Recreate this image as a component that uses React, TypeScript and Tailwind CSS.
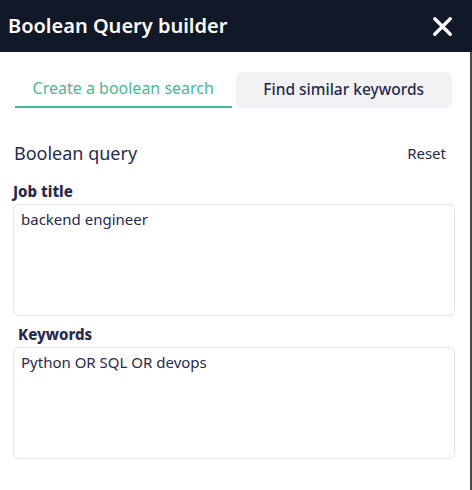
import { X } from "lucide-react";

const Field = ({ label, value, className }: { label: string; value: string; className?: string }) => {
  return (
    <div className="flex flex-col">
      <label className={"text-[15px] font-extrabold leading-5 text-[#272a4f] " + (className ?? "")}>{label}</label>
      <textarea
        defaultValue={value}
        className="mt-[3px] h-[112px] w-full resize-none rounded-md border border-[#e3e3e6] px-[7px] py-[4px] text-[15px] leading-5 text-[#272a4f] focus:outline-none"
      />
    </div>
  );
};

const App = () => {
  return (
    <div className="flex h-[490px] w-[472px] flex-col bg-white font-['Noto_Sans',sans-serif]">
      <div className="flex h-[52px] items-center justify-between bg-[#111827] pl-2 pr-[14px]">
        <h1 className="text-[20px] font-semibold text-white">Boolean Query builder</h1>
        <button className="text-white">
          <X size={31} strokeWidth={2.6} />
        </button>
      </div>

      <div className="flex flex-1 flex-col border-r-2 border-[#4a4a4a] pl-[13px] pr-[15px]">
        <div className="mt-5 flex gap-1 pl-[2px] pr-[3px]">
          <button className="h-9 flex-1 border-b-2 border-[#4cb699] pb-[2px] text-[16px] text-[#4cb699]">
            Create a boolean search
          </button>
          <button className="h-9 flex-1 rounded-md bg-[#f2f2f5] text-[15.5px] font-medium text-[#272a4f]">
            Find similar keywords
          </button>
        </div>

        <div className="mt-[32px] flex items-center justify-between pl-px pr-[9px]">
          <span className="text-[18px] text-[#272a4f]">Boolean query</span>
          <button className="text-[15px] text-[#272a4f]">Reset</button>
        </div>

        <div className="mt-[14px] flex flex-col gap-2">
          <Field label="Job title" value="backend engineer" />
          <Field label="Keywords" value="Python OR SQL OR devops" className="pl-[5px]" />
        </div>
      </div>
    </div>
  );
};

export default App;
